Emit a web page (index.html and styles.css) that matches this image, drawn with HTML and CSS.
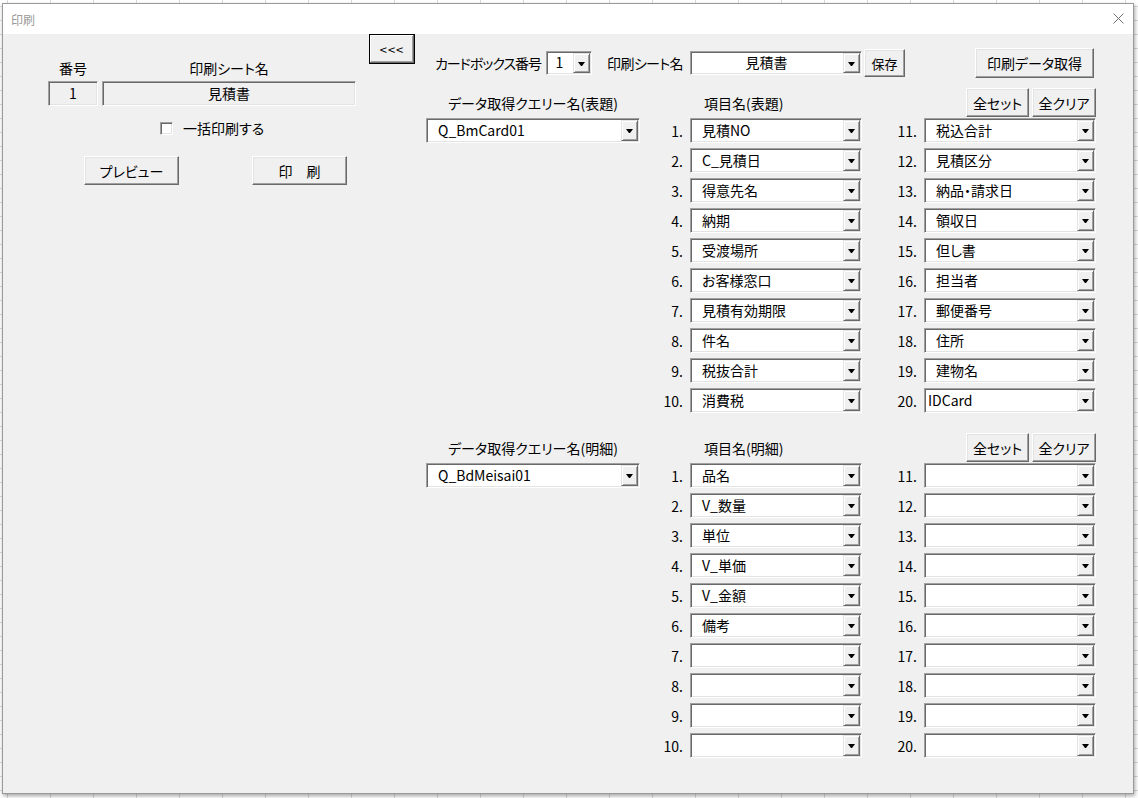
FILE: index.html
```html
<!DOCTYPE html>
<html lang="ja">
<head>
    <meta charset="UTF-8">
    <title>印刷</title>
    <link rel="stylesheet" href="styles.css">
</head>
<body>
    <div class="dialog">
        <div class="titlebar">
            <span class="title">印刷</span>
            <svg class="close" width="11" height="11" viewBox="0 0 11 11">
                <path d="M0.5 0.5 L10.5 10.5 M10.5 0.5 L0.5 10.5" stroke="#707070" stroke-width="1" fill="none"/>
            </svg>
        </div>
        <div class="client">
            <div class="left-panel">
                <div class="head-labels">
                    <span class="no-col">番号</span>
                    <span class="name-col">印刷シート名</span>
                </div>
                <div class="head-boxes">
                    <div class="readonly no-col">1</div>
                    <div class="readonly name-col">見積書</div>
                </div>
                <label class="check-row">
                    <span class="checkbox"></span>
                    <span>一括印刷する</span>
                </label>
                <div class="action-row">
                    <button class="btn action">プレビュー</button>
                    <button class="btn action print">印　刷</button>
                </div>
            </div>

            <button class="btn default back">&lt;&lt;&lt;</button>

            <div class="right-area">
                <div class="top-row">
                    <span class="top-label box-no-label">カードボックス番号</span>
                    <div class="combo small center"><span class="value">1</span><span class="drop"><i></i></span></div>
                    <span class="top-label sheet-label">印刷シート名</span>
                    <div class="combo wide center"><span class="value">見積書</span><span class="drop"><i></i></span></div>
                    <button class="btn save">保存</button>
                    <button class="btn fetch">印刷データ取得</button>
                </div>

                <div class="section" id="header-section">
                    <div class="section-head">
                        <span class="query-label">データ取得クエリー名(表題)</span>
                        <span class="item-label">項目名(表題)</span>
                        <div class="set-buttons">
                            <button class="btn set">全セット</button>
                            <button class="btn clear">全クリア</button>
                        </div>
                    </div>
                    <div class="section-body">
                        <div class="query-col">
                            <div class="combo query"><span class="value">Q_BmCard01</span><span class="drop"><i></i></span></div>
                        </div>
                        <div class="list list-a"></div>
                        <div class="list list-b"></div>
                    </div>
                </div>

                <div class="section" id="detail-section">
                    <div class="section-head">
                        <span class="query-label">データ取得クエリー名(明細)</span>
                        <span class="item-label">項目名(明細)</span>
                        <div class="set-buttons">
                            <button class="btn set">全セット</button>
                            <button class="btn clear">全クリア</button>
                        </div>
                    </div>
                    <div class="section-body">
                        <div class="query-col">
                            <div class="combo query"><span class="value">Q_BdMeisai01</span><span class="drop"><i></i></span></div>
                        </div>
                        <div class="list list-a"></div>
                        <div class="list list-b"></div>
                    </div>
                </div>
            </div>
        </div>
    </div>

    <script>
        const headerItems = [
            '見積NO', 'C_見積日', '得意先名', '納期', '受渡場所',
            'お客様窓口', '見積有効期限', '件名', '税抜合計', '消費税',
            '税込合計', '見積区分', '納品・請求日', '領収日', '但し書',
            '担当者', '郵便番号', '住所', '建物名', 'IDCard'
        ];
        const detailItems = [
            '品名', 'V_数量', '単位', 'V_単価', 'V_金額', '備考'
        ];

        function comboHtml(text) {
            const flush = /^[A-Za-z]/.test(text) && !text.includes('_') ? ' flush' : '';
            return `<div class="combo item${flush}"><span class="value">${text}</span><span class="drop"><i></i></span></div>`;
        }

        function fillSection(id, items) {
            const section = document.getElementById(id);
            const listA = section.querySelector('.list-a');
            const listB = section.querySelector('.list-b');
            for (let i = 0; i < 20; i++) {
                const row = `<div class="item-row"><span class="num">${i + 1}.</span>${comboHtml(items[i] || '')}</div>`;
                (i < 10 ? listA : listB).innerHTML += row;
            }
        }

        fillSection('header-section', headerItems);
        fillSection('detail-section', detailItems);
    </script>
</body>
</html>
```

FILE: styles.css
```css
body {
    margin: 0;
    padding: 3px 0 0 2px;
    height: 798px;
    box-sizing: border-box;
    overflow: hidden;
    font-family: "Noto Sans CJK JP", "Noto Sans", sans-serif;
    font-size: 14px;
    font-feature-settings: "palt";
    color: #000;
    background-color: #fff;
    background-image:
        linear-gradient(90deg, #dadada 1px, transparent 1px),
        linear-gradient(#dadada 1px, transparent 1px);
    background-size: 43px 14px;
    background-position: 7px 6px;
}
.dialog {
    width: 1132px;
    height: 791px;
    box-sizing: border-box;
    border: 1px solid #9a9a9a;
    background: #f0f0f0;
    box-shadow: 1px 2px 4px rgba(0, 0, 0, 0.35);
    display: flex;
    flex-direction: column;
}
.titlebar {
    height: 30px;
    background: #fff;
    display: flex;
    align-items: center;
    justify-content: space-between;
    padding: 0 9px 0 8px;
}
.title {
    font-size: 12px;
    color: #9a9a9a;
}
.close {
    display: block;
    margin-top: -2px;
}
.client {
    flex: 1;
    display: flex;
    align-items: flex-start;
}

/* win classic 3d borders */
.btn {
    font-family: inherit;
    font-size: 14px;
    font-feature-settings: "palt";
    color: #000;
    background: #f0f0f0;
    padding: 0;
    border: 1px solid;
    border-color: #fff #696969 #696969 #fff;
    box-shadow: inset -1px -1px #a0a0a0, inset 1px 1px #e3e3e3;
    box-sizing: border-box;
    cursor: pointer;
}
.btn.default {
    border: 1px solid #000;
    box-shadow: inset -1px -1px #696969, inset 1px 1px #fff, inset -2px -2px #a0a0a0;
}
.combo, .readonly, .checkbox {
    border: 1px solid;
    border-color: #a0a0a0 #fff #fff #a0a0a0;
    box-shadow: inset 1px 1px #696969, inset -1px -1px #e3e3e3;
    box-sizing: border-box;
}

/* left panel */
.left-panel {
    margin: 26px 0 0 45px;
    width: 308px;
}
.head-labels, .head-boxes {
    display: flex;
    gap: 4px;
}
.head-labels span {
    line-height: 16px;
    text-align: center;
}
.no-col {
    width: 50px;
}
.name-col {
    width: 254px;
}
.head-boxes {
    margin-top: 5px;
}
.readonly {
    height: 25px;
    background: #f0f0f0;
    display: flex;
    align-items: center;
    justify-content: center;
    padding-bottom: 2px;
}
.check-row {
    display: flex;
    align-items: center;
    gap: 10px;
    margin: 16px 0 0 112px;
    height: 13px;
    line-height: 13px;
}
.checkbox {
    width: 13px;
    height: 13px;
    background: #fff;
}
.action-row {
    display: flex;
    margin: 21px 0 0 36px;
    gap: 73px;
}
.action {
    width: 95px;
    height: 29px;
}

.back {
    width: 46px;
    height: 30px;
    margin-left: 13px;
    font-size: 13px;
    letter-spacing: 1px;
}

/* right area */
.right-area {
    margin: 14px 0 0 11px;
    width: 670px;
}
.top-row {
    display: flex;
    align-items: center;
    height: 30px;
}
.top-label {
    box-sizing: border-box;
    white-space: nowrap;
    letter-spacing: -0.6px;
}
.box-no-label {
    width: 120px;
    padding-left: 9px;
    letter-spacing: -1px;
}
.sheet-label {
    width: 98px;
    padding-left: 15px;
}
.combo {
    display: flex;
    background: #fff;
    height: 25px;
}
.combo .value {
    flex: 1;
    display: flex;
    align-items: center;
    padding: 0 0 2px 11px;
    white-space: nowrap;
    overflow: hidden;
}
.combo.center .value {
    justify-content: center;
    padding-left: 0;
}
.combo.flush .value {
    padding-left: 3px;
}
.drop {
    width: 17px;
    margin: 1px;
    background: #f0f0f0;
    border: 1px solid;
    border-color: #e3e3e3 #696969 #696969 #e3e3e3;
    box-shadow: inset 1px 1px #fff, inset -1px -1px #a0a0a0;
    box-sizing: border-box;
    display: flex;
    align-items: center;
    justify-content: center;
}
.drop i {
    width: 1px;
    height: 0;
    border-top: 4px solid #000;
    border-left: 3px solid transparent;
    border-right: 3px solid transparent;
    margin-top: 1px;
}
.combo.small {
    width: 46px;
    height: 24px;
}
.combo.wide {
    width: 172px;
    height: 24px;
}
.save {
    width: 41px;
    height: 28px;
    margin-left: 2px;
    font-size: 13px;
}
.fetch {
    width: 119px;
    height: 30px;
    margin: 0 2px 0 auto;
}

.section {
    margin-top: 10px;
}
.section + .section {
    margin-top: 20px;
}
.section-head {
    display: flex;
    align-items: center;
    height: 30px;
}
.query-label {
    width: 214px;
    text-align: center;
}
.item-label {
    width: 222px;
    box-sizing: border-box;
    padding-left: 64px;
}
.set-buttons {
    width: 234px;
    display: flex;
    justify-content: flex-end;
    gap: 3px;
    align-self: flex-start;
}
.set-buttons .btn {
    height: 29px;
}
.set {
    width: 63px;
}
.clear {
    width: 64px;
}
.section-body {
    display: flex;
}
.query-col {
    width: 214px;
}
.combo.query {
    width: 214px;
}
.list {
    display: flex;
    flex-direction: column;
    gap: 5px;
}
.item-row {
    display: flex;
    align-items: center;
}
.num {
    box-sizing: border-box;
    text-align: right;
    padding-right: 7px;
    padding-top: 1px;
}
.list-a .num {
    width: 50px;
}
.list-b .num {
    width: 62px;
}
.combo.item {
    width: 172px;
}
```
